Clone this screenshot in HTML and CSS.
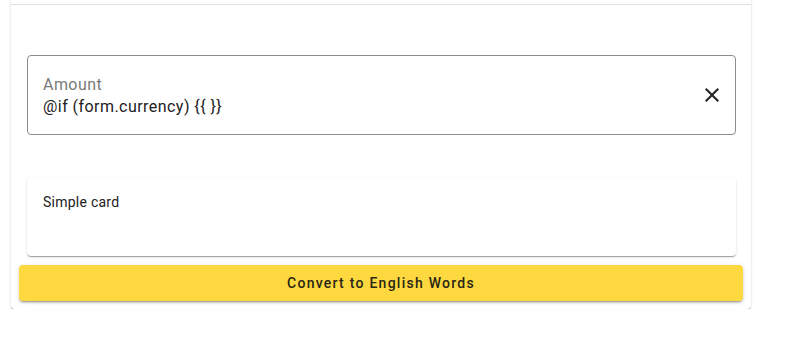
FILE: index.html
```html
<!DOCTYPE html>
<html lang="en">
<head>
    <meta charset="UTF-8">
    <meta name="viewport" content="width=device-width, initial-scale=1.0">
    <title>Amount to words</title>
    <link rel="stylesheet" href="styles.css">
</head>
<body>

    <div class="page">
        <div class="card">
            <div class="card-head"></div>

            <div class="form">
                <div class="field">
                    <div class="field-text">
                        <label class="field-label">Amount</label>
                        <div class="field-value">@if (form.currency) {{ }}</div>
                    </div>
                    <button class="clear-btn" aria-label="Clear">
                        <svg width="24" height="24" viewBox="0 0 24 24">
                            <path d="M19 6.41L17.59 5 12 10.59 6.41 5 5 6.41 10.59 12 5 17.59 6.41 19 12 13.41 17.59 19 19 17.59 13.41 12z" fill="#212121"/>
                        </svg>
                    </button>
                </div>

                <div class="simple-card">Simple card</div>
            </div>

            <button class="convert-btn">Convert to English Words</button>
        </div>
    </div>

</body>
</html>
```

FILE: styles.css
```css
body {
    margin: 0;
    font-family: 'Roboto', 'Noto Sans', sans-serif;
    background-color: #fff;
    color: #212121;
}

.page {
    width: 740px;
    padding-left: 11px;
}

.card {
    margin-top: -20px;
    padding: 0 8px 8px;
    background-color: #fff;
    border-radius: 4px;
    box-shadow: 0 2px 1px -1px rgba(0, 0, 0, 0.25), 0 1px 1px 0 rgba(0, 0, 0, 0.16), 0 1px 3px 0 rgba(0, 0, 0, 0.12);
}

.card-head {
    height: 24px;
    margin: 0 -8px;
    border-bottom: 1px solid #e0e0e0;
}

.form {
    padding: 50px 7px 0 8px;
}

.field {
    display: flex;
    align-items: center;
    height: 78px;
    border: 1px solid #8c8c8c;
    border-radius: 4px;
    padding: 0 11px 0 15px;
}

.field-text {
    flex: 1;
    padding-top: 2px;
    letter-spacing: 0.45px;
}

.field-label {
    display: block;
    font-size: 16px;
    line-height: 22px;
    color: #7a7a7a;
}

.field-value {
    font-size: 16px;
    line-height: 22px;
    color: #212121;
}

.clear-btn {
    background: none;
    border: none;
    padding: 0;
    width: 24px;
    height: 24px;
    cursor: pointer;
}

.simple-card {
    margin-top: 43px;
    height: 46px;
    padding: 16px;
    font-size: 14px;
    line-height: 16px;
    letter-spacing: 0.25px;
    color: #212121;
    border-radius: 4px;
    box-shadow: 0 2px 1px -1px rgba(0, 0, 0, 0.2), 0 1px 1px 0 rgba(0, 0, 0, 0.14), 0 1px 3px 0 rgba(0, 0, 0, 0.12);
}

.convert-btn {
    display: block;
    width: 100%;
    height: 36px;
    margin-top: 9px;
    border: none;
    border-radius: 4px;
    background-color: #fdd83f;
    color: #2a2616;
    font-family: 'Roboto', sans-serif;
    font-size: 14px;
    font-weight: 500;
    letter-spacing: 1.25px;
    cursor: pointer;
    box-shadow: 0 3px 1px -2px rgba(0, 0, 0, 0.2), 0 2px 2px 0 rgba(0, 0, 0, 0.14), 0 1px 5px 0 rgba(0, 0, 0, 0.12);
}
```
